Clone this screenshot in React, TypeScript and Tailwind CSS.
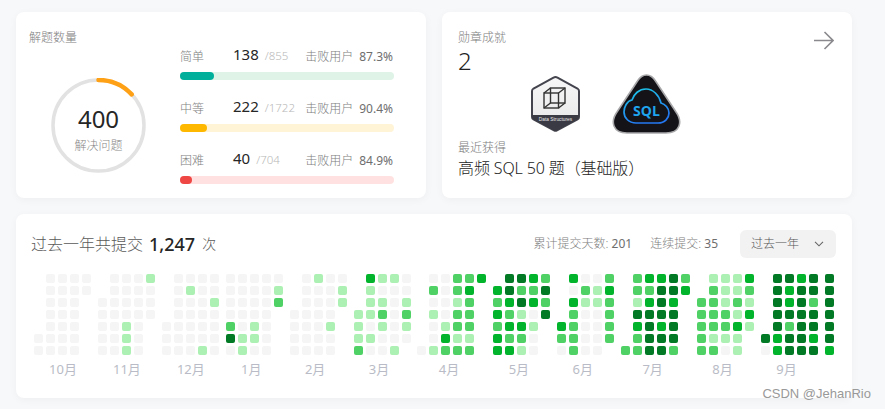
import React from "react";

const cellClass: Record<string, string> = {
  ".": "bg-transparent",
  "0": "bg-[#f5f5f6]",
  "1": "bg-[#adf0b3]",
  "2": "bg-[#4fd166]",
  "3": "bg-[#02b32c]",
  "4": "bg-[#027a25]",
};

const months: { label: string; rows: string[] }[] = [
  { label: "10月", rows: [".0000", ".0000", ".000.", ".000.", ".000.", "0000.", "0000."] },
  { label: "11月", rows: [".0001", ".0000", "00000", "00000", "0010.", "0010.", "0010."] },
  { label: "12月", rows: [".0000", ".0100", ".0001", ".0000", "00000", "00000", "00010"] },
  { label: "1月", rows: ["00000", "00001", "00002", "0000.", "2010.", "4110.", "0100."] },
  { label: "2月", rows: [".0100", ".0001", ".0001", "0000.", "0001.", "0000.", "0000."] },
  { label: "3月", rows: [".3110", ".1000", ".1101", "11202", "10101", "11000", "2001."] },
  { label: "4月", rows: [".00223", ".2023.", ".0012.", ".1022.", ".0122.", ".0311.", "01222."] },
  { label: "5月", rows: [".4432", "34224", "23432", "32104", "2331.", "3220.", "3310."] },
  { label: "6月", rows: [".3002", ".0213", ".3112", ".2002", "32002", "22002", "0200."] },
  { label: "7月", rows: [".23342", ".22443", ".1343.", ".4444.", ".3434.", ".2444.", "22442."] },
  { label: "8月", rows: [".1113", ".2112", "22121", "22213", "22231", "2111.", "2201."] },
  { label: "9月", rows: [".4434", ".4344", ".4342", ".4444", ".4244", "43443", "03444"] },
  { label: "", rows: ["4", "4", "4", "4", "4", "4", "3"] },
];

const stats = [
  { name: "简单", solved: 138, total: "/855", pct: "87.3%", track: "bg-[#dff3e7]", fill: "bg-[#00af9b]", width: "w-[34px]" },
  { name: "中等", solved: 222, total: "/1722", pct: "90.4%", track: "bg-[#fff4d6]", fill: "bg-[#ffb800]", width: "w-[27px]" },
  { name: "困难", solved: 40, total: "/704", pct: "84.9%", track: "bg-[#ffe1e1]", fill: "bg-[#ef4743]", width: "w-[12px]" },
];

function Month({ label, rows }: { label: string; rows: string[] }) {
  const cols = rows[0].length;
  return (
    <div className="flex flex-col items-center">
      <div className="grid gap-[3px]" style={{ gridTemplateColumns: `repeat(${cols}, 9px)` }}>
        {rows.flatMap((row, r) =>
          row.split("").map((c, i) => (
            <div key={`${r}-${i}`} className={`h-[9px] w-[9px] rounded-[2px] ${cellClass[c]}`} />
          ))
        )}
      </div>
      {label && (
        <div className={`mt-1 h-5 whitespace-nowrap text-[13px] leading-5 text-[#b9bcc6] ${label.length === 2 ? "mr-[6px]" : "ml-[1px]"}`}>
          {label}
        </div>
      )}
    </div>
  );
}

function HexBadge() {
  return (
    <svg width="49" height="56" viewBox="0 0 49 56" className="shrink-0">
      <defs>
        <linearGradient id="hexg" x1="0" y1="0" x2="0" y2="1">
          <stop offset="0" stopColor="#f7f7f8" />
          <stop offset="1" stopColor="#e6e6e8" />
        </linearGradient>
      </defs>
      <path d="M22.5 1.6 Q24.5 0.6 26.5 1.6 L46.5 12.5 Q48 13.4 48 15 L48 41 Q48 42.6 46.5 43.5 L26 54.4 Q24.5 55.2 23 54.4 L2.5 43.5 Q1 42.6 1 41 L1 15 Q1 13.4 2.5 12.5 Z" fill="url(#hexg)" stroke="#44444e" strokeWidth="2" />
      <path d="M1 39 L48 39 L48 41 Q48 42.6 46.5 43.5 L26 54.4 Q24.5 55.2 23 54.4 L2.5 43.5 Q1 42.6 1 41 Z" fill="#3a3a44" />
      <rect x="13" y="17" width="14.5" height="15" fill="none" stroke="#333" strokeWidth="1.4" />
      <rect x="19.5" y="12" width="14.5" height="15" fill="none" stroke="#333" strokeWidth="1.4" />
      <path d="M13 17 L19.5 12 M27.5 17 L34 12 M27.5 32 L34 27 M13 32 L19.5 27" stroke="#333" strokeWidth="1.4" fill="none" />
      <text x="24.5" y="44.5" textAnchor="middle" fontSize="4.8" fill="#e8e8ea" fontFamily="'Liberation Sans', sans-serif">Data Structures</text>
    </svg>
  );
}

function SqlBadge() {
  return (
    <svg width="69" height="60" viewBox="0 0 69 60" className="shrink-0">
      <defs>
        <linearGradient id="sqlg" x1="0" y1="0" x2="0.4" y2="1">
          <stop offset="0" stopColor="#1ccbe6" />
          <stop offset="1" stopColor="#2478f2" />
        </linearGradient>
      </defs>
      <path d="M34.5 1 C38.5 1 41 3 43.5 7 L64 38 C71 48 68 59 54 59 L15 59 C1 59 -2 48 5 38 L25.5 7 C28 3 30.5 1 34.5 1 Z" fill="#141318" stroke="#a8a8aa" strokeWidth="1.6" />
      <path d="M24 49 H46 C53 49 57 44 57 39 C57 34 53 30 49 29 C47 21 41 15 34 15 C27 15 22 20 20 26 C15 27 12 33 12 38 C12 44 17 49 24 49 Z" fill="none" stroke="url(#sqlg)" strokeWidth="1.7" />
      <text x="34.5" y="42" textAnchor="middle" fontSize="14" fontWeight="700" fill="#1fa4ee" fontFamily="'Open Sans', sans-serif">SQL</text>
    </svg>
  );
}

export default function App() {
  const font = "font-['Noto_Sans','Noto_Sans_CJK_SC',sans-serif]";
  const card = "rounded-lg bg-white shadow-[0_2px_8px_rgba(0,0,0,0.04)]";
  return (
    <div className={`relative h-[409px] w-[885px] overflow-hidden bg-[#f7f8fa] pl-4 pt-3 ${font}`}>
      <div className="flex w-[836px] gap-4">
        {/* Solved */}
        <div className={`flex h-[186px] w-[410px] pl-[13px] ${card}`}>
          <div className="w-[151px] pt-[17px]">
            <div className="h-[18px] text-xs font-light leading-[18px] text-[#7e7e7e]">解题数量</div>
            <div className="relative ml-[22px] mt-[31px] flex h-[95px] w-[95px] flex-col items-center">
              <svg width="95" height="95" viewBox="0 0 95 95" className="absolute inset-0">
                <circle cx="47.5" cy="47.5" r="45.5" fill="none" stroke="#e2e2e2" strokeWidth="3.5" />
                <path d="M47.5 2 A45.5 45.5 0 0 1 80.7 16.4" fill="none" stroke="#ffa116" strokeWidth="4.5" strokeLinecap="round" />
              </svg>
              <div className="mt-[24px] h-[34px] text-2xl leading-[34px] text-[#262626]">400</div>
              <div className="mt-[1px] h-[18px] text-xs font-light leading-[18px] text-[#888]">解决问题</div>
            </div>
          </div>
          <div className="flex w-[214px] flex-col gap-[18px] pt-[34px]">
            {stats.map((s) => (
              <div key={s.name}>
                <div className="flex h-5 items-center text-xs">
                  <span className="mt-[1px] w-[53px] font-light text-[#7e7e7e]">{s.name}</span>
                  <span className="-mt-[4px] flex items-baseline">
                    <span className="text-[15px] text-[#262626]">{s.solved}</span>
                    <span className="ml-[6px] text-[11.5px] font-light text-[#b8b8b8]">{s.total}</span>
                  </span>
                  <span className="ml-auto mt-[1px] font-light text-[#7e7e7e]">击败用户</span>
                  <span className="ml-[6px] mr-px mt-[1px] text-[#6e6e6e]">{s.pct}</span>
                </div>
                <div className={`mt-[6px] h-2 rounded-full ${s.track}`}>
                  <div className={`h-2 rounded-full ${s.fill} ${s.width}`} />
                </div>
              </div>
            ))}
          </div>
        </div>

        {/* Badges */}
        <div className={`h-[186px] w-[410px] pl-4 pr-[18px] pt-[17px] ${card}`}>
          <div className="flex justify-between">
            <div>
              <div className="h-[18px] text-xs font-light leading-[18px] text-[#7e7e7e]">勋章成就</div>
              <div className="-mt-px h-[30px] text-2xl font-light leading-[30px] text-[#222]">2</div>
            </div>
            <svg width="20" height="19" viewBox="0 0 20 19" className="mt-[2px]" fill="none" stroke="#8a8a8e" strokeWidth="1.6">
              <path d="M0 9.5 H19 M10.5 1 L19 9.5 L10.5 18" />
            </svg>
          </div>
          <div className="-mt-[2px] ml-[73px] flex h-[60px] items-center gap-8">
            <HexBadge />
            <SqlBadge />
          </div>
          <div className="mt-[5px] h-[18px] text-xs font-light leading-[18px] text-[#7e7e7e]">最近获得</div>
          <div className="-mt-px h-6 whitespace-nowrap text-base font-light leading-6 tracking-[-0.12px] text-[#222]">高频 SQL 50 题（基础版）</div>
        </div>
      </div>

      {/* Heatmap */}
      <div className={`mt-4 h-[184px] w-[836px] pt-4 ${card}`}>
        <div className="flex h-7 items-center pl-[15px] pr-4">
          <span className="text-base font-light text-[#5a5a5a]">过去一年共提交</span>
          <span className="ml-[6px] text-lg font-medium text-[#262626]">1,247</span>
          <span className="ml-[7px] text-sm font-light text-[#5a5a5a]">次</span>
          <span className="ml-auto text-xs font-light text-[#7e7e7e]">
            累计提交天数: <span className="font-normal text-[#6e6e6e]">201</span>
          </span>
          <span className="ml-[18px] text-xs font-light text-[#7e7e7e]">
            连续提交: <span className="font-normal text-[#6e6e6e]">35</span>
          </span>
          <div className="ml-[22px] flex h-7 w-24 items-center justify-between rounded-md bg-[#f2f2f3] pl-[11px] pr-3">
            <span className="text-xs font-light text-[#555]">过去一年</span>
            <svg width="10" height="6" viewBox="0 0 10 6" fill="none" stroke="#666" strokeWidth="1.1">
              <path d="M1 0.8 L5 4.8 L9 0.8" />
            </svg>
          </div>
        </div>
        <div className="mt-4 flex gap-[6.92px] pl-[18px]">
          {months.map((m, i) => (
            <Month key={i} label={m.label} rows={m.rows} />
          ))}
        </div>
      </div>

      <div className="absolute bottom-[7px] right-[14px] font-['Liberation_Sans',sans-serif] text-[13px] leading-4 text-[#999]">
        CSDN @JehanRio
      </div>
    </div>
  );
}
